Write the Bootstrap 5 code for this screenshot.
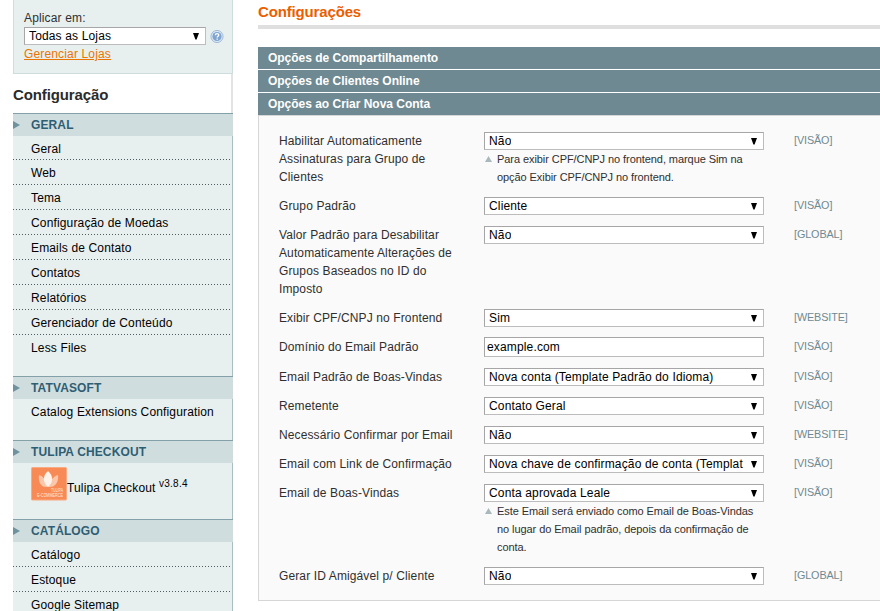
<!DOCTYPE html>
<html lang="pt-BR">
<head>
<meta charset="utf-8">
<meta name="viewport" content="width=device-width, initial-scale=1">
<title>Configurações</title>
<link href="https://cdn.jsdelivr.net/npm/bootstrap@5.3.0/dist/css/bootstrap.min.css" rel="stylesheet">
<style>
body{font:12px/18px "Liberation Sans",Arial,sans-serif;color:#2f2f2f;background:#fff;height:611px;overflow:hidden;letter-spacing:.15px}
.side{width:220px;margin-left:13px}
.store-box{height:74px;background:#e7efef;border:1px solid #cddddd;border-top:0;padding:9px 8px 0 10px}
.store-box a{color:#ea7601}
.store-sel{width:182px}
.side-title{height:39px;font-size:15px;line-height:42px;font-weight:700;color:#2b2b2b;letter-spacing:-.12px;border-right:2px solid #e3e3e3}
.group-title{height:23px;background:#d0dddf;border-top:1px solid #84a0a8;color:#2f5e72;font-weight:700;gap:11px;line-height:22px;letter-spacing:.12px}
.items{background:#e7efef;border-right:1px solid #a9bec1;color:#000}
.items>li{height:25px;line-height:26px;padding-left:18px;background:repeating-linear-gradient(90deg,#4f5c60 0 1px,transparent 1px 3px) left bottom/100% 1px no-repeat}
.items>li:first-child{height:24px}
.items.late>li:first-child{height:25px}
.items>li:last-child{background:none;height:auto}
.geral{height:240px}
.tatva{height:41px}
.tulipa{height:56px}
.late{height:90px}
.sel{height:18px;line-height:17px;background:#fff;border:1px solid #a6a6a6;border-right-color:#bcbcbc;border-bottom-color:#bcbcbc;color:#000;padding:0 6px 0 4px}
.sel span{overflow:hidden;white-space:nowrap}
.txt{display:block;height:20px;width:280px;margin-top:-1px;border:1px solid #a6a6a6;border-right-color:#bcbcbc;border-bottom-color:#bcbcbc;padding:0 2px;color:#000;letter-spacing:.15px;border-radius:0}
.content{margin-left:25px}
.page-title{height:29px;border-bottom:4px solid #dfdfdf;color:#eb5e00;font-size:15px;line-height:24px;font-weight:700;letter-spacing:-.15px}
.sections{margin-top:18px}
.section-bar{height:22px;background:#6f8992;color:#fff;font-weight:700;line-height:22px;padding-left:10px;margin-bottom:1px;letter-spacing:-.02px}
.panel{border:1px solid #d6d6d6;border-right:0;background:#fafafa;margin-top:-1px;height:486px;padding:11px 0 0 20px}
.field{display:grid;grid-template-columns:205px 280px 1fr;padding:5px 0 6px}
.field.input-row{min-height:30px}
.field label{width:180px;letter-spacing:.12px}
.field .scope{padding-left:30px;font-size:10.8px;line-height:17px;color:#6f8992;letter-spacing:-.1px}
.hint{font-size:11px;padding-left:13px;position:relative;letter-spacing:-.07px;margin:0;width:285px}
.hint svg{position:absolute;left:1px;top:6px}
sup{font-size:10px;top:-5px;letter-spacing:.25px}
</style>
<script src="https://cdn.jsdelivr.net/npm/bootstrap@5.3.0/dist/js/bootstrap.bundle.min.js"></script>
</head>
<body>
<svg width="0" height="0" class="position-absolute">
<symbol id="down" viewBox="0 0 6 7"><path d="M0 0h6L3.600 6.500H2.400z"/></symbol>
<symbol id="right" viewBox="0 0 7 8"><path d="M0 0l7 4-7 4z" fill="#6f939d"/></symbol>
<symbol id="up" viewBox="0 0 7 6"><path d="M3.500 0L7 6H0z" fill="#a9b8bd"/></symbol>
</svg>
<div class="d-flex">
<aside class="side flex-shrink-0">
<div class="store-box">
<div>Aplicar em:</div>
<div class="d-flex align-items-center">
<div class="store-sel sel d-flex align-items-center justify-content-between flex-shrink-0"><span>Todas as Lojas</span><svg width="6" height="7"><use href="#down"/></svg></div>
<svg class="ms-1" width="15" height="15" viewBox="0 0 15 15"><circle cx="7.500" cy="7.500" r="6.500" fill="#dce8f4" stroke="#9ab6d4"/><circle cx="7.500" cy="7.500" r="4.900" fill="#7fa4d0"/><path d="M5.700 6.200c0-2.400 3.700-2.300 3.700-.2 0 1.300-1.700 1.300-1.700 2.600M7.700 9.700v1.400" fill="none" stroke="#fff" stroke-width="1.400"/></svg>
</div>
<a href="#">Gerenciar Lojas</a>
</div>
<h1 class="side-title m-0">Configuração</h1>
<div class="group-title d-flex align-items-center"><svg width="7" height="8"><use href="#right"/></svg>GERAL</div>
<ul class="items geral list-unstyled m-0"><li>Geral</li><li>Web</li><li>Tema</li><li>Configuração de Moedas</li><li>Emails de Contato</li><li>Contatos</li><li>Relatórios</li><li>Gerenciador de Conteúdo</li><li>Less Files</li></ul>
<div class="group-title d-flex align-items-center"><svg width="7" height="8"><use href="#right"/></svg>TATVASOFT</div>
<ul class="items tatva list-unstyled m-0"><li>Catalog Extensions Configuration</li></ul>
<div class="group-title d-flex align-items-center"><svg width="7" height="8"><use href="#right"/></svg>TULIPA CHECKOUT</div>
<ul class="items tulipa list-unstyled m-0"><li class="d-flex pt-1"><svg width="36" height="34" viewBox="0 0 36 34"><rect x=".5" y=".5" width="35" height="32.500" rx="1" fill="#f88a55" stroke="#f8aa82"/><path d="M17 20C10 21 7 15 8 8c4 1 7 5 9 12zM17 20c7 1 11-5 10-12-4 1-8 5-10 12z" fill="#fbc6a9"/><path d="M17 20c-6-5-5-12 0-16 5 4 6 11 0 16z" fill="#fff2e8"/><g font-size="4.500" letter-spacing="0" fill="#ffe9dc"><text x="20" y="25" textLength="12" lengthAdjust="spacingAndGlyphs">TULIPA</text><text x="6" y="30.300" textLength="26" lengthAdjust="spacingAndGlyphs">E-COMMERCE</text></g></svg><span class="pt-2">Tulipa Checkout <sup>v3.8.4</sup></span></li></ul>
<div class="group-title d-flex align-items-center"><svg width="7" height="8"><use href="#right"/></svg>CATÁLOGO</div>
<ul class="items late list-unstyled m-0"><li>Catálogo</li><li>Estoque</li><li>Google Sitemap</li></ul>
</aside>
<main class="content flex-grow-1">
<h2 class="page-title mb-0">Configurações</h2>
<div class="sections">
<div class="section-bar">Opções de Compartilhamento</div>
<div class="section-bar">Opções de Clientes Online</div>
<div class="section-bar">Opções ao Criar Nova Conta</div>
</div>
<div class="panel">
<div class="field"><label>Habilitar Automaticamente Assinaturas para Grupo de Clientes</label><div><div class="sel d-flex align-items-center justify-content-between"><span>Não</span><svg width="6" height="7"><use href="#down"/></svg></div><p class="hint"><svg width="7" height="6"><use href="#up"/></svg>Para exibir CPF/CNPJ no frontend, marque Sim na<br>opção Exibir CPF/CNPJ no frontend.</p></div><div class="scope">[VISÃO]</div></div>
<div class="field"><label>Grupo Padrão</label><div class="sel d-flex align-items-center justify-content-between"><span>Cliente</span><svg width="6" height="7"><use href="#down"/></svg></div><div class="scope">[VISÃO]</div></div>
<div class="field"><label>Valor Padrão para Desabilitar<br>Automaticamente Alterações de<br>Grupos Baseados no ID do<br>Imposto</label><div class="sel d-flex align-items-center justify-content-between"><span>Não</span><svg width="6" height="7"><use href="#down"/></svg></div><div class="scope">[GLOBAL]</div></div>
<div class="field"><label>Exibir CPF/CNPJ no Frontend</label><div class="sel d-flex align-items-center justify-content-between"><span>Sim</span><svg width="6" height="7"><use href="#down"/></svg></div><div class="scope">[WEBSITE]</div></div>
<div class="field input-row"><label>Domínio do Email Padrão</label><input class="txt" type="text" value="example.com"><div class="scope">[VISÃO]</div></div>
<div class="field"><label>Email Padrão de Boas-Vindas</label><div class="sel d-flex align-items-center justify-content-between"><span>Nova conta (Template Padrão do Idioma)</span><svg width="6" height="7"><use href="#down"/></svg></div><div class="scope">[VISÃO]</div></div>
<div class="field"><label>Remetente</label><div class="sel d-flex align-items-center justify-content-between"><span>Contato Geral</span><svg width="6" height="7"><use href="#down"/></svg></div><div class="scope">[VISÃO]</div></div>
<div class="field"><label>Necessário Confirmar por Email</label><div class="sel d-flex align-items-center justify-content-between"><span>Não</span><svg width="6" height="7"><use href="#down"/></svg></div><div class="scope">[WEBSITE]</div></div>
<div class="field"><label>Email com Link de Confirmação</label><div class="sel d-flex align-items-center justify-content-between"><span>Nova chave de confirmação de conta (Templat</span><svg width="6" height="7"><use href="#down"/></svg></div><div class="scope">[VISÃO]</div></div>
<div class="field"><label>Email de Boas-Vindas</label><div><div class="sel d-flex align-items-center justify-content-between"><span>Conta aprovada Leale</span><svg width="6" height="7"><use href="#down"/></svg></div><p class="hint"><svg width="7" height="6"><use href="#up"/></svg>Este Email será enviado como Email de Boas-Vindas<br>no lugar do Email padrão, depois da confirmação de<br>conta.</p></div><div class="scope">[VISÃO]</div></div>
<div class="field"><label>Gerar ID Amigável p/ Cliente</label><div class="sel d-flex align-items-center justify-content-between"><span>Não</span><svg width="6" height="7"><use href="#down"/></svg></div><div class="scope">[GLOBAL]</div></div>
</div>
</main>
</div>
</body>
</html>
